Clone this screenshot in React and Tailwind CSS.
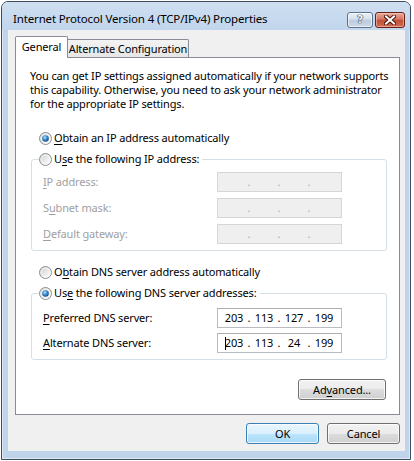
import React from "react";

const Radio = ({ checked }) => (
  <svg width="13" height="13" viewBox="0 0 13 13" className="shrink-0">
    <defs>
      <linearGradient id="radio-bg" x1="0" y1="0" x2="1" y2="1">
        <stop offset="0" stopColor="#c9cacb" />
        <stop offset="0.6" stopColor="#eeeeee" />
        <stop offset="1" stopColor="#fdfdfd" />
      </linearGradient>
      <radialGradient id="radio-dot" cx="0.4" cy="0.35" r="0.75">
        <stop offset="0" stopColor="#b5e3fb" />
        <stop offset="0.45" stopColor="#3a8ccf" />
        <stop offset="1" stopColor="#0e3b73" />
      </radialGradient>
    </defs>
    <circle cx="6.5" cy="6.5" r="6" fill="url(#radio-bg)" stroke="#8d8f91" />
    <circle cx="6.5" cy="6.5" r="4.5" fill="none" stroke="#ffffff" strokeOpacity="0.7" />
    {checked && <circle cx="6.5" cy="6.5" r="3.3" fill="url(#radio-dot)" />}
  </svg>
);

const Key = ({ children }) => (
  <span className="underline underline-offset-[2px] decoration-[1px]">{children}</span>
);

const IpBox = ({ parts, disabled, caret }) => (
  <div
    className={
      disabled
        ? "w-[125px] h-[20px] border border-[#d6d6d6] bg-[#efefef] flex items-center px-[3px] text-[#a9a9a9]"
        : "w-[125px] h-[20px] border border-[#b9bcc2] border-t-[#abadb3] bg-white flex items-center px-[3px] text-black"
    }
  >
    {[0, 1, 2, 3].map((i) => (
      <React.Fragment key={i}>
        {i > 0 && <span className="w-[4px] text-center leading-[14px]">.</span>}
        <span className="w-[26px] text-center leading-[14px] whitespace-nowrap">
          {caret && i === 0 && (
            <span className="inline-block w-px h-[13px] bg-black align-[-3px] -mr-px" />
          )}
          {parts ? parts[i] : ""}
        </span>
      </React.Fragment>
    ))}
  </div>
);

const Field = ({ label, disabled, parts, caret }) => (
  <div className="h-[20px] flex items-center">
    <div className={disabled ? "w-[174px] ml-[11px] leading-[14px] text-[#a0a0a0]" : "w-[174px] ml-[11px] leading-[14px]"}>
      {label}
    </div>
    <IpBox parts={parts} disabled={disabled} caret={caret} />
  </div>
);

const Button = ({ children, primary, className }) => (
  <div
    className={
      (primary
        ? "border-[#3c7fb1] bg-[linear-gradient(#eaf6fd_0%,#d9f0fc_50%,#bee6fd_50%,#a7d9f5_100%)] "
        : "border-[#707070] bg-[linear-gradient(#f2f2f2_0%,#ebebeb_50%,#dddddd_50%,#cfcfcf_100%)] ") +
      "h-[21px] border rounded-[3px] flex items-center justify-center leading-[14px] shadow-[inset_0_0_0_1px_rgba(255,255,255,0.75)] " +
      className
    }
  >
    {children}
  </div>
);

export default function App() {
  return (
    <div className="w-[414px] h-[461px] bg-white overflow-hidden font-['Noto_Sans',sans-serif] text-[11px] tracking-[-0.15px] text-black">
      <div className="ml-[1px] mt-[1px] w-[410px] h-[459px] border border-[#3d4b5c] rounded-t-[7px] bg-[#bfd3eb] flex flex-col shadow-[inset_0_0_0_1px_rgba(255,255,255,0.5)]">
        {/* title bar */}
        <div className="h-[28px] flex items-start rounded-t-[6px] bg-gradient-to-b from-[#cfdff1] to-[#c1d5ec]">
          <div className="pl-[11px] pt-[9px] text-[11.5px] leading-[15px] whitespace-nowrap">
            Internet Protocol Version 4 (TCP/IPv4) Properties
          </div>
          <div className="ml-auto mr-[5px] mt-[10px] flex gap-[2px]">
            <div className="w-[26px] h-[16px] rounded-[3px] border border-[#5f708a] bg-[linear-gradient(#e9f0f8_0%,#d5e1ee_45%,#bccbdd_50%,#cad8e8_100%)] shadow-[inset_0_0_0_1px_rgba(255,255,255,0.6)] flex items-center justify-center">
              <span className="font-['DejaVu_Sans',sans-serif] font-bold text-[11px] leading-[12px] text-[#f4f7fb] [text-shadow:0_0_1px_#23344f,0_0_1px_#23344f,0_0_1px_#23344f]">
                ?
              </span>
            </div>
            <div className="w-[30px] h-[16px] rounded-[3px] border border-[#6b1f14] bg-[linear-gradient(#e8a797_0%,#d47764_45%,#c04f37_50%,#d06a50_100%)] shadow-[inset_0_0_0_1px_rgba(255,220,210,0.5)] flex items-center justify-center">
              <svg width="12" height="10" viewBox="0 0 12 10">
                <path d="M2 1.5 L10 8.5 M10 1.5 L2 8.5" stroke="#4a140c" strokeWidth="4" strokeLinecap="square" />
                <path d="M2 1.5 L10 8.5 M10 1.5 L2 8.5" stroke="#ffffff" strokeWidth="2" strokeLinecap="square" />
              </svg>
            </div>
          </div>
        </div>

        {/* client area */}
        <div className="ml-[6px] w-[397px] h-[421px] bg-[#f0f0f0] flex flex-col">
          {/* tabs */}
          <div className="h-[27px] pt-[6px] pl-[7px] flex items-end">
            <div className="relative z-10 w-[53px] h-[22px] -mb-px border border-b-0 border-[#898c95] rounded-t-[2px] bg-white flex items-center justify-center pb-[1px] leading-[14px]">
              General
            </div>
            <div className="w-[121px] h-[18px] border border-l-0 border-b-0 border-[#898c95] rounded-tr-[2px] bg-[linear-gradient(#f3f3f3,#e6e6e6)] flex items-center justify-center leading-[14px] whitespace-nowrap">
              Alternate Configuration
            </div>
          </div>

          {/* tab panel */}
          <div className="ml-[7px] w-[385px] h-[358px] border border-[#898c95] bg-white pl-[14px] pr-[12px] pt-[11px]">
            <p className="leading-[14px] whitespace-nowrap">
              You can get IP settings assigned automatically if your network supports
              <br />
              this capability. Otherwise, you need to ask your network administrator
              <br />
              for the appropriate IP settings.
            </p>

            <div className="ml-[9px] mt-[20px] h-[14px] flex items-center gap-[2px] leading-[14px]">
              <Radio checked />
              <span>
                <Key>O</Key>btain an IP address automatically
              </span>
            </div>

            <div className="ml-px mt-[14px] w-[356px] border border-[#d5dfe5] rounded-[3px] pb-[6px]">
              <div className="-mt-[8px] ml-[7px] w-fit h-[14px] bg-white pr-[3px] flex items-center gap-[2px] leading-[14px]">
                <Radio />
                <span>
                  U<Key>s</Key>e the following IP address:
                </span>
              </div>
              <div className="mt-[6px] flex flex-col gap-[6px]">
                <Field disabled label={<><Key>I</Key>P address:</>} />
                <Field disabled label={<>S<Key>u</Key>bnet mask:</>} />
                <Field disabled label={<><Key>D</Key>efault gateway:</>} />
              </div>
            </div>

            <div className="ml-[9px] mt-[14px] h-[14px] flex items-center gap-[2px] leading-[14px]">
              <Radio />
              <span>
                O<Key>b</Key>tain DNS server address automatically
              </span>
            </div>

            <div className="ml-px mt-[14px] w-[356px] border border-[#d5dfe5] rounded-[3px] pb-[6px]">
              <div className="-mt-[8px] ml-[7px] w-fit h-[14px] bg-white pr-[3px] flex items-center gap-[2px] leading-[14px]">
                <Radio checked />
                <span>
                  Us<Key>e</Key> the following DNS server addresses:
                </span>
              </div>
              <div className="mt-[8px] flex flex-col gap-[5px]">
                <Field label={<><Key>P</Key>referred DNS server:</>} parts={["203", "113", "127", "199"]} />
                <Field label={<><Key>A</Key>lternate DNS server:</>} parts={["203", "113", "24", "199"]} caret />
              </div>
            </div>

            <div className="mt-[19px] w-[356px] flex justify-end">
              <Button className="w-[88px]">
                Ad<Key>v</Key>anced...
              </Button>
            </div>
          </div>

          {/* dialog buttons */}
          <div className="mt-[8px] pr-[5px] flex justify-end gap-[8px]">
            <Button primary className="w-[73px]">OK</Button>
            <Button className="w-[73px]">Cancel</Button>
          </div>
        </div>
      </div>
    </div>
  );
}
